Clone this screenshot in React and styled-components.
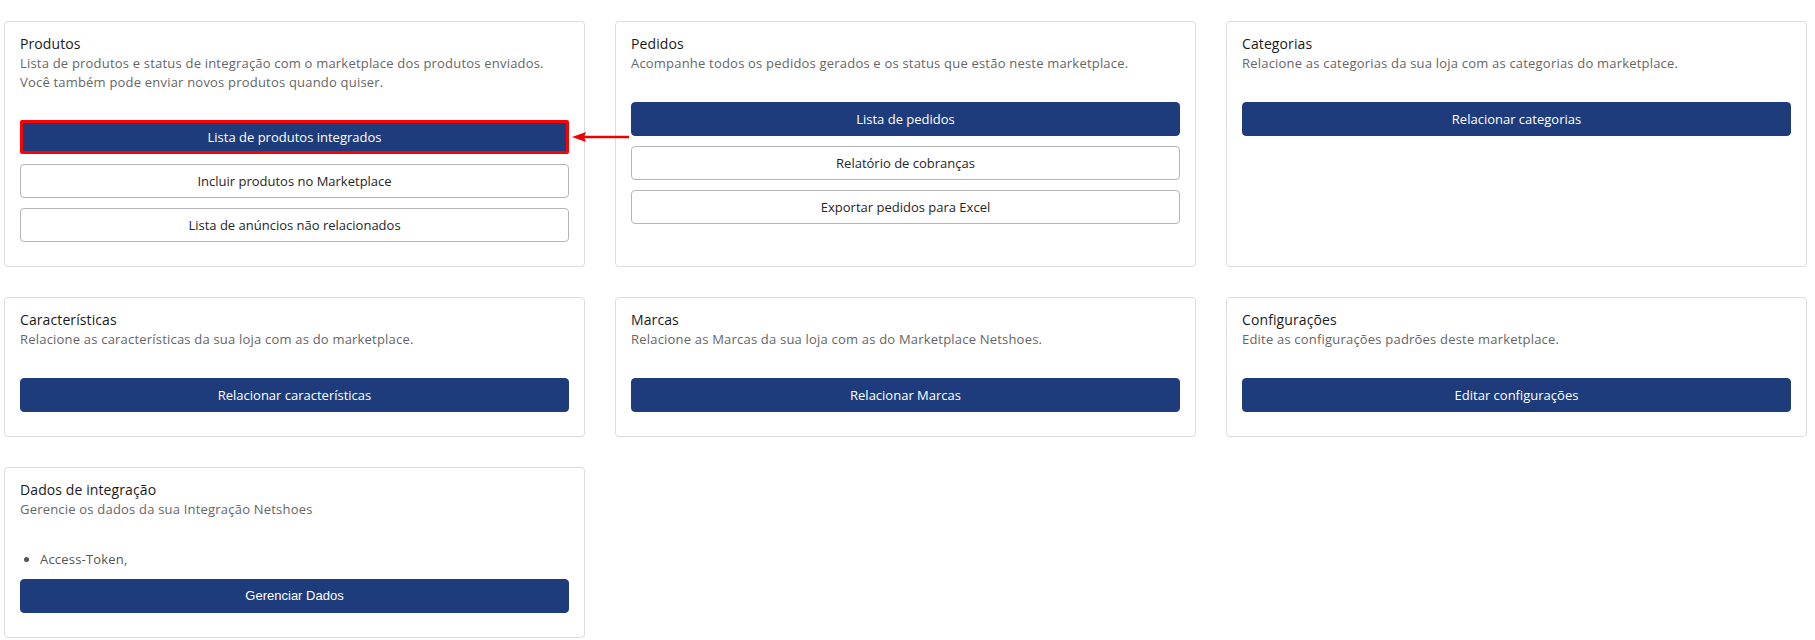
import React from "react";
import styled, { createGlobalStyle, css } from 'styled-components';


const GlobalStyle = createGlobalStyle`
    html, body {
        margin: 0;
        padding: 0;
        background: #ffffff;
    }

    body {
        font-family: "Open Sans", "Liberation Sans", Arial, sans-serif;
        color: #333333;
    }
`;

const Page = styled.div`
    padding: 21px 8px 0 4px;
`;

const Grid = styled.div`
    display: grid;
    grid-template-columns: repeat(3, 1fr);
    column-gap: 30px;
    row-gap: 30px;
`;

const Card = styled.section`
    display: flex;
    flex-direction: column;
    padding: 12px 15px 14px;
    border: 1px solid #dddddd;
    border-radius: 4px;
    background: #ffffff;
`;

const Title = styled.h4`
    margin: 0;
    font-size: 14px;
    line-height: 20px;
    font-weight: 400;
    letter-spacing: 0.1px;
    color: #1a1a1a;
`;

const Description = styled.p`
    margin: 0 0 29px;
    font-size: 13px;
    line-height: 18.57px;
    letter-spacing: 0.2px;
    color: #666666;
`;

const InfoList = styled.ul`
    margin: 3px 0 10px;
    padding-left: 20px;
    font-size: 13px;
    line-height: 18.57px;
    letter-spacing: 0.2px;
    color: #555555;
`;

const ButtonSlot = styled.div`
    position: relative;
    margin-bottom: 10px;
`;

const Button = styled.button`
    display: block;
    width: 100%;
    height: 34px;
    padding: 0 12px;
    border-radius: 4px;
    font-family: ${props => props.$legacy ? '"Liberation Sans", Arial, sans-serif' : '"Open Sans", Arial, sans-serif'};
    font-size: 13px;
    cursor: pointer;

    ${props => props.$variant === 'primary' ? css`
        background: #1e3c7c;
        border: 1px solid #1e3c7c;
        color: #ffffff;
    ` : css`
        background: #ffffff;
        border: 1px solid #b5b5b5;
        color: #262626;
    `}

    ${props => props.$highlight && css`
        border: 3px solid #ff0000;
        border-radius: 2px;
    `}
`;

const Arrow = styled.svg`
    position: absolute;
    left: calc(100% + 3px);
    top: 50%;
    width: 57px;
    height: 12px;
    transform: translateY(-50%);
    overflow: visible;
    pointer-events: none;
`;


const cards = [
    {
        title: 'Produtos',
        text: 'Lista de produtos e status de integração com o marketplace dos produtos enviados. Você também pode enviar novos produtos quando quiser.',
        buttons: [
            { label: 'Lista de produtos integrados', variant: 'primary', highlight: true },
            { label: 'Incluir produtos no Marketplace' },
            { label: 'Lista de anúncios não relacionados' },
        ],
    },
    {
        title: 'Pedidos',
        text: 'Acompanhe todos os pedidos gerados e os status que estão neste marketplace.',
        buttons: [
            { label: 'Lista de pedidos', variant: 'primary' },
            { label: 'Relatório de cobranças' },
            { label: 'Exportar pedidos para Excel' },
        ],
    },
    {
        title: 'Categorias',
        text: 'Relacione as categorias da sua loja com as categorias do marketplace.',
        buttons: [
            { label: 'Relacionar categorias', variant: 'primary' },
        ],
    },
    {
        title: 'Características',
        text: 'Relacione as características da sua loja com as do marketplace.',
        buttons: [
            { label: 'Relacionar características', variant: 'primary' },
        ],
    },
    {
        title: 'Marcas',
        text: 'Relacione as Marcas da sua loja com as do Marketplace Netshoes.',
        buttons: [
            { label: 'Relacionar Marcas', variant: 'primary' },
        ],
    },
    {
        title: 'Configurações',
        text: 'Edite as configurações padrões deste marketplace.',
        buttons: [
            { label: 'Editar configurações', variant: 'primary' },
        ],
    },
    {
        title: 'Dados de integração',
        text: 'Gerencie os dados da sua Integração Netshoes',
        items: ['Access-Token,'],
        buttons: [
            { label: 'Gerenciar Dados', variant: 'primary', legacy: true },
        ],
    },
];


function PointerArrow() {
    return (
        <Arrow viewBox="0 0 57 12">
            <line x1="10" y1="6" x2="57" y2="6" stroke="#ee0000" strokeWidth="2.5" />
            <polygon points="0,6 14,1 12,6 14,11" fill="#ee0000" />
        </Arrow>
    );
}


export default function App() {
    return (
        <Page>
            <GlobalStyle />

            <Grid>
                {cards.map((card, index) =>
                    <Card key={'card-' + String(index)}>
                        <Title>{card.title}</Title>
                        <Description>{card.text}</Description>

                        {card.items &&
                            <InfoList>
                                {card.items.map(item => <li key={item}>{item}</li>)}
                            </InfoList>
                        }

                        {card.buttons.map(button =>
                            <ButtonSlot key={button.label}>
                                <Button
                                    $variant={button.variant}
                                    $highlight={button.highlight}
                                    $legacy={button.legacy}
                                >
                                    {button.label}
                                </Button>
                                {button.highlight && <PointerArrow />}
                            </ButtonSlot>
                        )}
                    </Card>
                )}
            </Grid>
        </Page>
    );
}
